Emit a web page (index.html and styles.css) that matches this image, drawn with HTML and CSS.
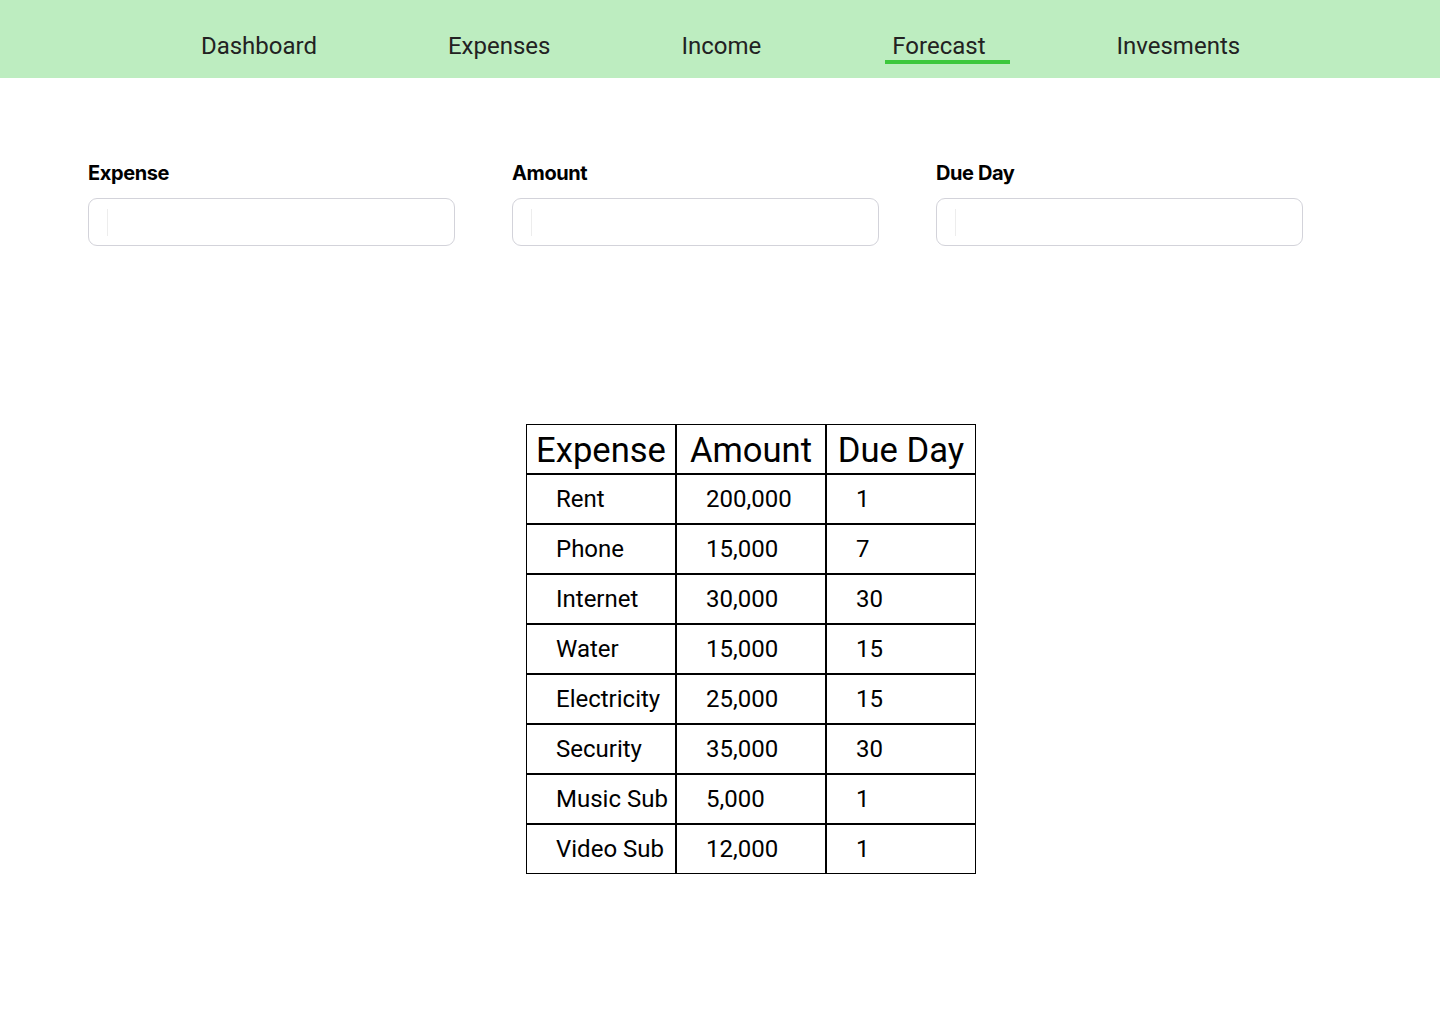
FILE: index.html
```html
<!DOCTYPE html>
<html lang="en">
<head>
<meta charset="utf-8">
<title>Forecast</title>
<link rel="stylesheet" href="styles.css">
</head>
<body>
<nav class="topnav">
  <a class="nav-link" href="#">Dashboard</a>
  <a class="nav-link" href="#">Expenses</a>
  <a class="nav-link" href="#">Income</a>
  <a class="nav-link active" href="#">Forecast</a>
  <a class="nav-link" href="#">Invesments</a>
</nav>

<form class="entry-form">
  <div class="field">
    <label class="field-label" for="expense">Expense</label>
    <div class="field-input"><input id="expense" type="text"></div>
  </div>
  <div class="field">
    <label class="field-label" for="amount">Amount</label>
    <div class="field-input"><input id="amount" type="text"></div>
  </div>
  <div class="field">
    <label class="field-label" for="dueday">Due Day</label>
    <div class="field-input"><input id="dueday" type="text"></div>
  </div>
</form>

<section class="table-wrap">
  <table class="expense-table">
    <thead>
      <tr><th>Expense</th><th>Amount</th><th>Due Day</th></tr>
    </thead>
    <tbody>
      <tr><td>Rent</td><td>200,000</td><td>1</td></tr>
      <tr><td>Phone</td><td>15,000</td><td>7</td></tr>
      <tr><td>Internet</td><td>30,000</td><td>30</td></tr>
      <tr><td>Water</td><td>15,000</td><td>15</td></tr>
      <tr><td>Electricity</td><td>25,000</td><td>15</td></tr>
      <tr><td>Security</td><td>35,000</td><td>30</td></tr>
      <tr><td>Music Sub</td><td>5,000</td><td>1</td></tr>
      <tr><td>Video Sub</td><td>12,000</td><td>1</td></tr>
    </tbody>
  </table>
</section>
</body>
</html>
```

FILE: styles.css
```css
* { box-sizing: border-box; }

html, body {
  margin: 0;
  padding: 0;
  background: #ffffff;
  font-family: Roboto, "Liberation Sans", sans-serif;
  color: #000;
}

.topnav {
  height: 78px;
  background: #bdedc0;
  display: flex;
  justify-content: center;
  align-items: flex-start;
  gap: 131px;
  padding: 31px 0 0 1px;
}

.nav-link {
  position: relative;
  font-size: 24px;
  line-height: 30px;
  color: #222222;
  text-decoration: none;
}

.nav-link.active::after {
  content: "";
  position: absolute;
  left: -7px;
  top: 29px;
  width: 125px;
  height: 4px;
  background: #3cc83c;
}

.entry-form {
  display: flex;
  gap: 57px;
  padding: 83px 0 0 88px;
}

.field {
  width: 367px;
  display: flex;
  flex-direction: column;
}

.field-label {
  font-family: Inter, "Liberation Sans", sans-serif;
  font-weight: 700;
  font-size: 20px;
  line-height: 24px;
  letter-spacing: -0.4px;
  color: #000;
}

.field-input {
  position: relative;
  margin-top: 13px;
  height: 48px;
  border: 1px solid #d3d3da;
  border-radius: 9px;
  background: #fff;
}

.field-input::before {
  content: "";
  position: absolute;
  left: 18px;
  top: 10px;
  width: 1px;
  height: 27px;
  background: #ededed;
}

.field-input input {
  width: 100%;
  height: 100%;
  border: 0;
  outline: none;
  background: transparent;
  padding: 0 20px;
  font-size: 16px;
  font-family: Roboto, sans-serif;
}

.table-wrap {
  display: flex;
  justify-content: center;
  padding: 178px 0 0 62px;
}

.expense-table {
  border-collapse: separate;
  border-spacing: 0;
  border: 0;
}

.expense-table th,
.expense-table td {
  width: 150px;
  height: 50px;
  border: 1px solid #000;
  padding: 0;
  vertical-align: middle;
}

.expense-table th {
  font-size: 34.6px;
  font-weight: 400;
  text-align: center;
  line-height: 40px;
  padding-top: 1px;
}

.expense-table td {
  font-size: 24px;
  line-height: 28px;
  text-align: left;
  padding-left: 29px;
  white-space: nowrap;
}
```
